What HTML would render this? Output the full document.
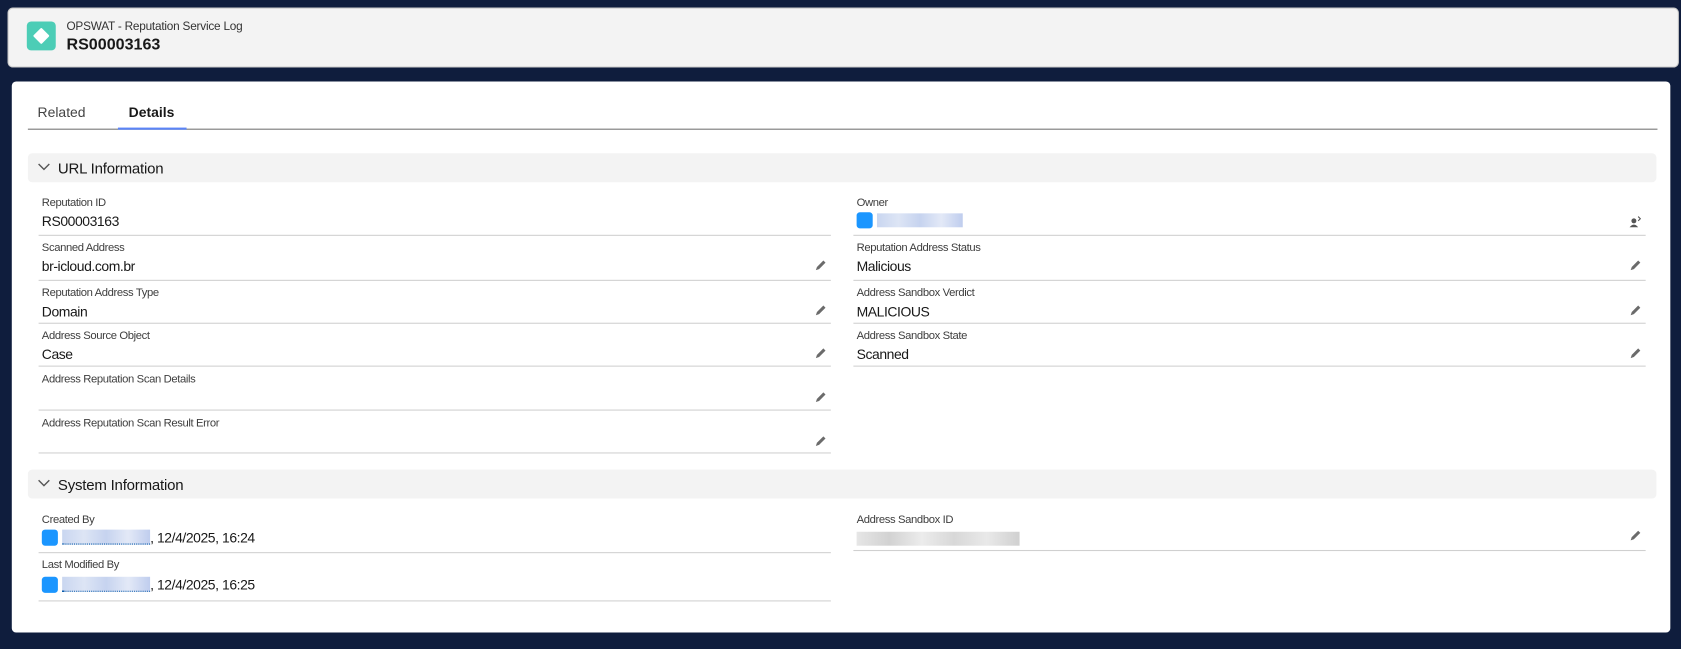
<!DOCTYPE html>
<html><head><meta charset="utf-8"><style>
html,body{margin:0;padding:0;background:#0f1d3d;width:1681px;height:648px;overflow:hidden}
#w{position:absolute;left:0;top:0;width:1568px;height:605px;transform:scale(1.0721);transform-origin:0 0;font-family:"Liberation Sans",sans-serif}
.abs{position:absolute}
.hdr{left:8px;top:8px;width:1557px;height:54px;background:#f3f3f3;border-radius:4px;box-shadow:0 0 0 1px #c9c9c9}
.card{left:11px;top:76px;width:1547px;height:514px;background:#fff;border-radius:4px}
.bar{position:absolute;left:26px;width:1519px;height:27px;background:#f3f3f3;border-radius:4px}
.bar span{position:absolute;left:28px;top:6px;font-size:14px;color:#181818;letter-spacing:-0.2px}
.bar svg{position:absolute;left:9px;top:9px}
.f{position:absolute;height:41px;border-bottom:1px solid #d0d0d0}
.f .l{position:absolute;left:3px;top:5px;font-size:10.5px;letter-spacing:-0.35px;color:#3e3e3e;white-space:nowrap}
.f .v{position:absolute;left:3px;top:21px;font-size:13px;letter-spacing:-0.4px;color:#181818;white-space:nowrap}
.f .p{position:absolute;right:4px;top:22px}
.av{display:inline-block;width:15px;height:15px;background:#1b96ff;border-radius:3px;vertical-align:-3px;margin-right:4px}
.blur{display:inline-block;height:13px;vertical-align:-2px;background:linear-gradient(90deg,#c9d6f0,#dde5f5,#c6d3ef,#e3e9f7,#bfcdee);border-bottom:1px dotted #0b5cab}
</style></head><body><div id="w">
<div class="abs hdr">
 <div class="abs" style="left:17px;top:12px;width:27px;height:27px;background:#4ccdb6;border-radius:4px">
  <div class="abs" style="left:8px;top:8px;width:11px;height:11px;background:#fff;transform:rotate(45deg);border-radius:1px"></div></div>
 <div class="abs" style="left:54px;top:11px;font-size:11px;color:#333;letter-spacing:-0.2px">OPSWAT - Reputation Service Log</div>
 <div class="abs" style="left:54px;top:25px;font-size:15px;font-weight:bold;color:#181818">RS00003163</div>
</div>
<div class="abs card"></div>
<div class="abs" style="left:35px;top:97px;font-size:13px;color:#444">Related</div>
<div class="abs" style="left:120px;top:97px;font-size:13px;font-weight:bold;color:#181818">Details</div>
<div class="abs" style="left:26px;top:120px;width:1520px;height:1px;background:#747474"></div>
<div class="abs" style="left:110px;top:119px;width:64px;height:2px;background:#5b84f6"></div>

<div class="bar" style="top:143px"><svg width="12" height="8" viewBox="0 0 12 8"><path d="M1 1l5 5 5-5" fill="none" stroke="#555" stroke-width="1.3"/></svg><span>URL Information</span></div>
<div class="bar" style="top:438px"><svg width="12" height="8" viewBox="0 0 12 8"><path d="M1 1l5 5 5-5" fill="none" stroke="#555" stroke-width="1.3"/></svg><span>System Information</span></div>

<svg width="0" height="0" style="position:absolute"><defs><symbol id="pen" viewBox="0 0 12 12"><path d="M2 10l1-3 6-6 2 2-6 6z" fill="#6b6b6b"/></symbol></defs></svg>

<div class="f" style="left:36px;top:178px;width:739px"><div class="l">Reputation ID</div><div class="v">RS00003163</div></div>
<div class="f" style="left:36px;top:220px;width:739px"><div class="l">Scanned Address</div><div class="v">br-icloud.com.br</div><svg class="p" width="12" height="12"><use href="#pen"/></svg></div>
<div class="f" style="left:36px;top:262px;width:739px;height:39px"><div class="l">Reputation Address Type</div><div class="v">Domain</div><svg class="p" width="12" height="12"><use href="#pen"/></svg></div>
<div class="f" style="left:36px;top:302px;width:739px;height:39px"><div class="l">Address Source Object</div><div class="v">Case</div><svg class="p" width="12" height="12"><use href="#pen"/></svg></div>
<div class="f" style="left:36px;top:343px;width:739px;height:39px"><div class="l">Address Reputation Scan Details</div><div class="v"></div><svg class="p" width="12" height="12"><use href="#pen"/></svg></div>
<div class="f" style="left:36px;top:384px;width:739px;height:38px"><div class="l">Address Reputation Scan Result Error</div><div class="v"></div><svg class="p" width="12" height="12"><use href="#pen"/></svg></div>

<div class="f" style="left:796px;top:178px;width:739px"><div class="l">Owner</div><div class="v" style="top:20px"><span class="av"></span><span class="blur" style="width:80px;border:0"></span></div>
 <svg class="p" width="12" height="12" viewBox="0 0 12 12" style="top:23px"><circle cx="5" cy="5" r="2.3" fill="#555"/><path d="M1 11q4-5 8 0z" fill="#555"/><path d="M9 1l2 2-2 2" fill="none" stroke="#555"/></svg></div>
<div class="f" style="left:796px;top:220px;width:739px"><div class="l">Reputation Address Status</div><div class="v">Malicious</div><svg class="p" width="12" height="12"><use href="#pen"/></svg></div>
<div class="f" style="left:796px;top:262px;width:739px;height:39px"><div class="l">Address Sandbox Verdict</div><div class="v">MALICIOUS</div><svg class="p" width="12" height="12"><use href="#pen"/></svg></div>
<div class="f" style="left:796px;top:302px;width:739px;height:39px"><div class="l">Address Sandbox State</div><div class="v">Scanned</div><svg class="p" width="12" height="12"><use href="#pen"/></svg></div>

<div class="f" style="left:36px;top:474px;width:739px"><div class="l">Created By</div><div class="v" style="top:20px"><span class="av"></span><span class="blur" style="width:82px"></span>, 12/4/2025, 16:24</div></div>
<div class="f" style="left:36px;top:516px;width:739px;height:44px"><div class="l">Last Modified By</div><div class="v" style="top:22px"><span class="av"></span><span class="blur" style="width:82px"></span>, 12/4/2025, 16:25</div></div>
<div class="f" style="left:796px;top:474px;width:739px;height:39px"><div class="l">Address Sandbox ID</div><div class="v"><span class="blur" style="width:152px;border:0;background:linear-gradient(90deg,#e6e6e6,#d2d2d2,#ececec,#d8d8d8,#e9e9e9,#d0d0d0)"></span></div><svg class="p" width="12" height="12" style="top:20px"><use href="#pen"/></svg></div>
</div></body></html>
